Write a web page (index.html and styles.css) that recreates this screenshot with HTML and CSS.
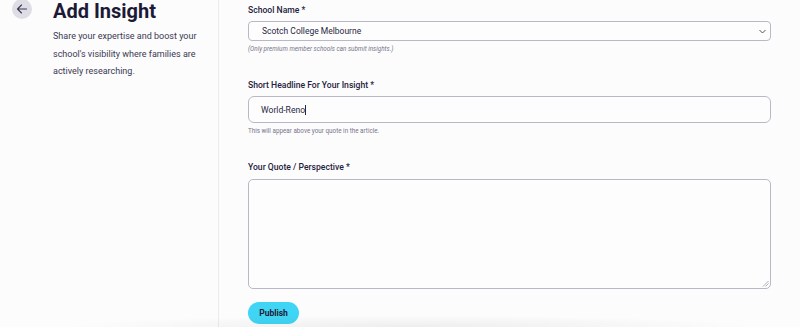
FILE: index.html
```html
<!DOCTYPE html>
<html>
<head>
<meta charset="utf-8">
<link rel="stylesheet" href="styles.css">
</head>
<body>
<div class="page">
  <aside class="side">
    <button class="back" aria-label="Back">
      <svg width="12" height="12" viewBox="0 0 12 12" fill="none" stroke="#3a3850" stroke-width="1.1" stroke-linecap="round" stroke-linejoin="round"><path d="M10.5 6H1.5M5.5 2L1.5 6L5.5 10"/></svg>
    </button>
    <div class="intro">
      <h1 class="title">Add Insight</h1>
      <p class="lead">Share your expertise and boost your school's visibility where families are actively researching.</p>
    </div>
  </aside>
  <main class="form">
    <div class="field">
      <label class="label">School Name *</label>
      <div class="select">
        <span>Scotch College Melbourne</span>
        <svg width="7" height="5" viewBox="0 0 7 5" fill="none" stroke="#555" stroke-width="1"><path d="M0.5 1L3.5 4L6.5 1"/></svg>
      </div>
      <p class="note italic">(Only premium member schools can submit insights.)</p>
    </div>
    <div class="field f2">
      <label class="label">Short Headline For Your Insight *</label>
      <div class="input"><span>World-Reno</span><span class="caret"></span></div>
      <p class="note">This will appear above your quote in the article.</p>
    </div>
    <div class="field f3">
      <label class="label">Your Quote / Perspective *</label>
      <div class="textarea">
        <svg class="grip" width="7" height="7" viewBox="0 0 7 7" stroke="#9a9aa8" stroke-width="0.8"><path d="M1 6.5L6.5 1M3.5 6.5L6.5 3.5"/></svg>
      </div>
    </div>
    <button class="publish">Publish</button>
  </main>
  <div class="shade"></div>
</div>
</body>
</html>
```
FILE: styles.css
```css
html, body {
  margin: 0;
  padding: 0;
  background: #fcfcfd;
  font-family: Roboto, "Noto Sans", sans-serif;
  color: #1f1d38;
  overflow: hidden;
}
.page {
  display: flex;
  width: 800px;
  height: 327px;
  position: relative;
  overflow: hidden;
}
.side {
  width: 219px;
  border-right: 1px solid #ececf0;
  display: flex;
  align-items: flex-start;
  padding-left: 12px;
  box-sizing: border-box;
  flex-shrink: 0;
}
.back {
  width: 20px;
  height: 20px;
  border-radius: 50%;
  background: #dedde6;
  border: none;
  padding: 0;
  margin-top: -1px;
  display: flex;
  align-items: center;
  justify-content: center;
}
.intro {
  margin-left: 21px;
}
.title {
  font-size: 20px;
  font-weight: 700;
  line-height: 24px;
  margin: -1px 0 0;
  color: #1c1a36;
}
.lead {
  margin: 5px 0 0;
  font-size: 9px;
  line-height: 17.5px;
  color: #3b3950;
  width: 150px;
}
.form {
  flex: 1;
  padding: 3px 29px 0 29px;
  display: flex;
  flex-direction: column;
  align-items: flex-start;
}
.field {
  width: 100%;
}
.label {
  display: block;
  font-size: 8.6px;
  font-weight: 500;
  line-height: 14px;
  color: #24223c;
}
.select {
  margin-top: 4px;
  height: 20px;
  box-sizing: border-box;
  border: 1px solid #b9b8c6;
  border-radius: 4px;
  background: #fdfdfe;
  display: flex;
  align-items: center;
  justify-content: space-between;
  padding: 0 4px 0 13px;
  font-size: 8.5px;
  color: #2a283f;
}
.note {
  margin: 4px 0 0;
  font-size: 6.3px;
  line-height: 9px;
  color: #77758a;
}
.italic {
  font-style: italic;
}
.f2 {
  margin-top: 24px;
}
.input {
  margin-top: 4px;
  height: 27px;
  box-sizing: border-box;
  border: 1px solid #b9b8c6;
  border-radius: 6px;
  background: #fdfdfe;
  display: flex;
  align-items: center;
  padding-left: 12px;
  font-size: 8.6px;
  color: #2a283f;
}
.caret {
  display: inline-block;
  width: 1px;
  height: 10px;
  background: #2a283f;
}
.f3 {
  margin-top: 24px;
}
.textarea {
  margin-top: 5px;
  height: 110px;
  box-sizing: border-box;
  border: 1px solid #b9b8c6;
  border-radius: 5px;
  background: #fdfdfe;
  position: relative;
}
.grip {
  position: absolute;
  right: 1px;
  bottom: 1px;
}
.publish {
  margin-top: 13px;
  width: 51px;
  height: 22px;
  border: none;
  border-radius: 11px;
  background: #40d5f4;
  font-family: Roboto, "Noto Sans", sans-serif;
  font-size: 8.5px;
  font-weight: 700;
  color: #1c1a36;
  padding: 0;
}
.shade {
  position: absolute;
  left: 60px;
  right: 40px;
  bottom: 0;
  height: 12px;
  background: radial-gradient(ellipse at 50% 100%, rgba(0,0,0,0.06), rgba(0,0,0,0) 70%);
  pointer-events: none;
}
```
